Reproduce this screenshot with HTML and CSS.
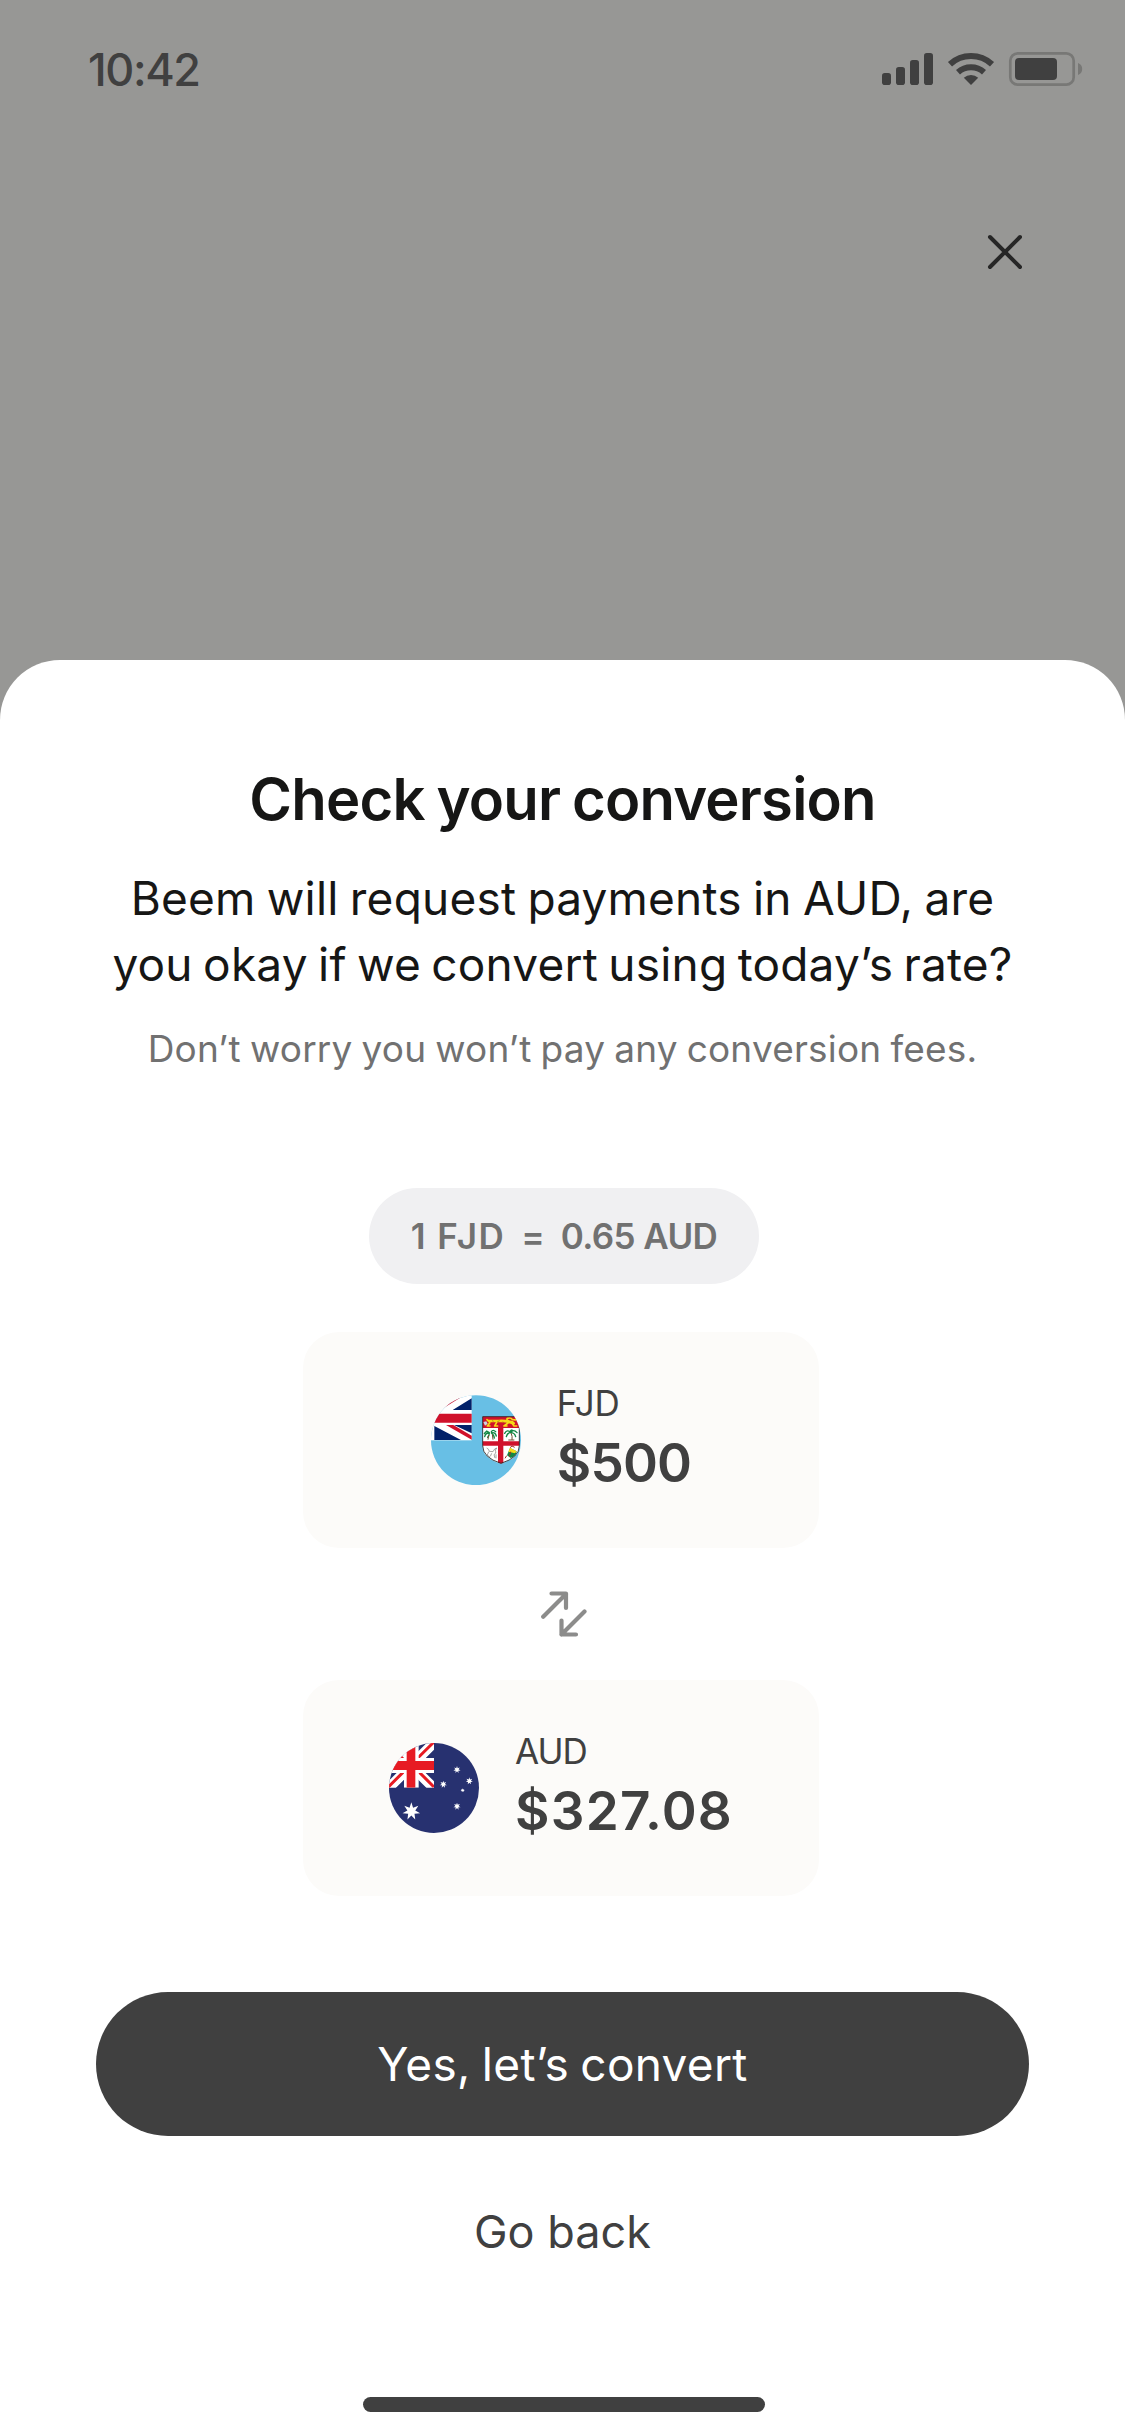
FILE: index.html
```html
<!DOCTYPE html>
<html lang="en">
<head>
<meta charset="utf-8">
<title>Check your conversion</title>
<link rel="stylesheet" href="styles.css">
</head>
<body>
<div class="screen">
  <header class="status-bar">
    <span class="time">10:42</span>
    <svg class="status-icons" viewBox="882 50 201 38" width="201" height="38">
      <g fill="#404040">
        <rect x="882" y="73" width="9" height="12" rx="2.8"/>
        <rect x="896" y="67" width="9" height="18" rx="2.8"/>
        <rect x="910" y="60" width="9" height="25" rx="2.8"/>
        <rect x="924" y="53" width="9" height="32" rx="2.8"/>
        <path d="M971 85l-7.200-7.200a11 11 0 0 1 14.400 0z"/>
        <rect x="1015" y="58" width="42" height="22" rx="4"/>
      </g>
      <g fill="none" stroke="#404040" stroke-width="6">
        <path d="M950 64.200a31 31 0 0 1 42 0"/>
        <path d="M958 72.300a19.500 19.500 0 0 1 26 0"/>
      </g>
      <rect x="1010.300" y="53.300" width="63.400" height="31.400" rx="7.500" fill="none" stroke="#787876" stroke-width="2.700"/>
      <path d="M1078 63a6.400 6.400 0 0 1 0 12z" fill="#787876"/>
    </svg>
  </header>
  <div class="toolbar">
    <button class="close" aria-label="Close">
      <svg viewBox="0 0 36 36" width="36" height="36"><path d="M3 3l30 30M33 3L3 33" stroke="#262626" stroke-width="4" stroke-linecap="round"/></svg>
    </button>
  </div>
  <main class="sheet">
    <h1 class="title">Check your conversion</h1>
    <p class="lead"><span class="lead-a">Beem will request payments in AUD, are</span><br><span class="lead-b">you okay if we convert using today’s rate?</span></p>
    <p class="note">Don’t worry you won’t pay any conversion fees.</p>
    <div class="rate"><span class="rate-from">1 FJD</span><span>=</span><span class="rate-to">0.65 AUD</span></div>

    <section class="card">
      <svg class="flag" viewBox="31 44 270 270" width="90" height="90">
        <defs>
          <clipPath id="disc-fj"><circle cx="166" cy="179.500" r="135"/></clipPath>
          <clipPath id="shield"><path d="M185 108h112v88q0 36-56 54q-56-18-56-54z"/></clipPath>
        </defs>
        <g clip-path="url(#disc-fj)">
          <rect x="31" y="44" width="270" height="271" fill="#68bfe5"/>
          <rect x="31" y="44" width="122" height="136" fill="#fff"/>
          <path d="M153 54v35H96zM41 137v42h80zM100 134h53v25z" fill="#012169"/>
          <path d="M76 134h22l55 32v12z" fill="#d0112b"/>
          <path d="M132 44h-24L50 80v12l20-10z" fill="#d0112b"/>
          <path d="M31 100h122v27H31z" fill="#d0112b"/>
          <g clip-path="url(#shield)">
            <rect x="185" y="108" width="112" height="143" fill="#fff"/>
            <path d="M185 108h112v35H185zM232 143h16v108h-16zM185 183h112v13H185z" fill="#d0112b"/>
            <g fill="none" stroke="#f7d917" stroke-linecap="round" stroke-linejoin="round">
              <path d="M205 122h30q18-1 30 3l14 4" stroke-width="8"/>
              <path d="M199 118l8 7M207 128l-7 9h8M228 126l-6 11h9M262 128l-12 9h9M274 129l6 8h8M276 124q-22-3-16-10q12-3 14 3q14 5 14-4" stroke-width="5"/>
            </g>
            <path d="M188 125l9-2 4 7-8 6z" fill="#cfd6df"/>
            <path d="M214 121l5 2M230 124l7-3M246 124l5 4" stroke="#9b6a16" stroke-width="2"/>
            <g fill="none" stroke="#128744" stroke-width="4" stroke-linecap="round">
              <path d="M206 158q-8-10-15 2M206 158q-11-1-14 11M206 158q0 8-5 13M212 154q5-8 13 0M212 158q12-4 15 9M212 158q8 4 9 15M198 152l8 5"/>
              <path d="M270 157q-10-12-18 2M270 157q-10 0-13 12M270 157q8-12 19 0M270 157q12 0 15 12M270 157q-3-7 4-8"/>
            </g>
            <path d="M204 164l-2 14M215 162l2 16M271 158q5 10 3 21M263 179h18" stroke="#735032" stroke-width="3" fill="none"/>
            <path d="M198 203q7 3 8 10l11 1q4-10 11-11q-6 7-3 11t-5 9l3 10M204 214l-4 10 8 7M213 219l-4 9M226 222v12" stroke="#777" stroke-width="2" fill="none"/>
            <path d="M268 203l20 10q-2 16-18 20l-11-8z" fill="#128744"/>
            <path d="M268 202l20 11-5 6-20-5z" fill="#f7d917"/>
            <path d="M268 202l6-5 8 4M258 226l-5 8M270 214l-4 14" stroke="#9e2c25" stroke-width="3" fill="none"/>
          </g>
          <path d="M186 109h110v87q0 36-55 53q-55-17-55-53z" fill="none" stroke="#222" stroke-width="2.500"/>
        </g>
      </svg>
      <div class="money">
        <span class="code code-fjd">FJD</span>
        <span class="amount amount-fjd">$500</span>
      </div>
    </section>

    <svg class="swap" viewBox="0 0 46 46" width="46" height="46">
      <path d="M2.200 25.800L25 3M10.500 2.500H25v14.500M43.500 20.500L20.500 43.500M20.500 29.500v14h14.500" fill="none" stroke="#8c8c8b" stroke-width="4.200" stroke-linecap="round" stroke-linejoin="round"/>
    </svg>

    <section class="card">
      <svg class="flag" viewBox="38 39 270 270" width="90" height="90">
        <defs>
          <clipPath id="disc-au"><circle cx="173" cy="174" r="135"/></clipPath>
          <clipPath id="canton"><path d="M38 39h135v134H38z"/></clipPath>
          <path id="star" d="M0-1L.195-.405 .782-.623 .439-.1 .975.223 .352.281 .434.901 0 .45-.434.901-.352.281-.975.223-.439-.1-.782-.623-.195-.405z" fill="#fff"/>
        </defs>
        <g clip-path="url(#disc-au)">
          <rect x="38" y="39" width="270" height="270" fill="#273170"/>
          <g clip-path="url(#canton)">
            <path d="M36 39L173 175M36 175L173 38" stroke="#fff" stroke-width="30"/>
            <path d="M36 43L104 111M104 103L36 171M104 102L173 171M100 108L173 36" stroke="#e71b23" stroke-width="9"/>
            <path d="M83 39h44v134H83zM38 84h135v45H38z" fill="#fff"/>
            <path d="M91 39h26v134H91zM38 93h135v27H38z" fill="#e71b23"/>
          </g>
          <use href="#star" transform="translate(105 244) scale(27)"/>
          <use href="#star" transform="translate(242 119) scale(11)"/>
          <use href="#star" transform="translate(279 153) scale(11)"/>
          <use href="#star" transform="translate(201 163) scale(11)"/>
          <use href="#star" transform="translate(242 229) scale(11)"/>
          <use href="#star" transform="translate(259 181) scale(6.500)"/>
        </g>
      </svg>
      <div class="money">
        <span class="code code-aud">AUD</span>
        <span class="amount amount-aud">$327.08</span>
      </div>
    </section>

    <button class="confirm">Yes, let’s convert</button>
    <button class="back">Go back</button>
    <div class="home-indicator"></div>
  </main>
</div>
</body>
</html>
```
FILE: styles.css
```css
* { box-sizing: border-box; }
body {
  margin: 0;
  font-family: Inter, "Liberation Sans", sans-serif;
  color: #161615;
}
button {
  border: 0;
  padding: 0;
  background: none;
  font: inherit;
}
svg { display: block; }
.screen {
  display: flex;
  flex-direction: column;
  width: 1125px;
  height: 2436px;
  background: #979795;
}
.status-bar {
  display: flex;
  justify-content: space-between;
  align-items: center;
  height: 138px;
  padding: 0 42px 0 88px;
}
.time {
  color: #404040;
  font-size: 45px;
  font-weight: 500;
  letter-spacing: -1.4px;
}
.toolbar {
  display: flex;
  justify-content: flex-end;
  height: 522px;
  padding: 96px 102px 0 0;
}
.close { height: 36px; }
.sheet {
  display: flex;
  flex-direction: column;
  align-items: center;
  height: 1776px;
  padding-top: 103px;
  border-radius: 60px 60px 0 0;
  background: #fff;
}
.title {
  margin: 0;
  font-size: 58px;
  font-weight: 600;
  line-height: 72px;
  letter-spacing: -0.8px;
  word-spacing: -2px;
  white-space: nowrap;
}
.lead {
  margin: 30px 0 0;
  font-size: 46px;
  line-height: 66px;
  text-align: center;
  white-space: nowrap;
}
.lead-a { letter-spacing: 0.2px; word-spacing: -1.9px; }
.lead-b { letter-spacing: 0.2px; word-spacing: -2.8px; }
.note {
  margin: 28px 0 0;
  color: #717171;
  font-size: 37px;
  line-height: 48px;
  letter-spacing: 0.2px;
  word-spacing: -1.6px;
  white-space: nowrap;
}
.rate {
  display: flex;
  justify-content: center;
  align-items: center;
  gap: 16px;
  width: 390px;
  height: 96px;
  margin: 115px 0 48px 3px;
  border-radius: 48px;
  background: #f0f0f2;
  color: #717171;
  font-size: 35px;
  font-weight: 600;
}
.rate-from { letter-spacing: 1.4px; }
.rate-to { letter-spacing: -0.6px; }
.card {
  display: flex;
  justify-content: center;
  align-items: center;
  gap: 36px;
  width: 516px;
  height: 216px;
  margin-right: 3px;
  border-radius: 36px;
  background: #fcfbf9;
  color: #404040;
}
.money {
  display: flex;
  flex-direction: column;
  gap: 6px;
  padding-bottom: 8px;
}
.code {
  font-size: 35px;
  line-height: 48px;
}
.code-fjd { letter-spacing: -0.3px; }
.code-aud { letter-spacing: -1px; }
.amount {
  font-size: 53px;
  font-weight: 600;
  line-height: 60px;
}
.amount-fjd { letter-spacing: -0.8px; }
.amount-aud { letter-spacing: 1.2px; }
.swap { margin: 43px 0 43px 3px; }
.confirm {
  width: 933px;
  height: 144px;
  margin-top: 96px;
  border-radius: 72px;
  background: #404040;
  color: #fff;
  font-size: 46px;
  letter-spacing: 0.3px;
  word-spacing: -2px;
}
.back {
  margin-top: 66px;
  color: #404040;
  font-size: 45px;
  line-height: 60px;
}
.home-indicator {
  width: 402px;
  height: 15px;
  margin: 135px 0 0 3px;
  border-radius: 7.5px;
  background: #404040;
}
```
